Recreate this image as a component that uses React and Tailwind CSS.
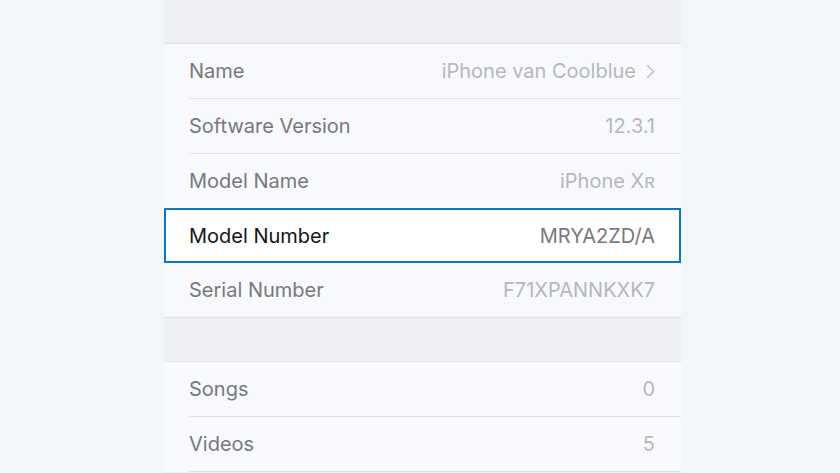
const font = { fontFamily: '"Inter", "Liberation Sans", sans-serif' };

const sectionA = [
  { label: 'Name', value: 'iPhone van Coolblue', chevron: true },
  { label: 'Software Version', value: '12.3.1' },
  { label: 'Model Name', value: 'iPhone Xʀ' },
  { label: 'Model Number', value: 'MRYA2ZD/A', active: true },
  { label: 'Serial Number', value: 'F71XPANNKXK7' },
];

const sectionB = [
  { label: 'Songs', value: '0' },
  { label: 'Videos', value: '5' },
];

function Row({ row, last }) {
  if (row.active) {
    return (
      <div className="h-[55px] -mt-px border-2 border-[#0b76c2] bg-white pl-[23px] pr-[24px] flex items-center justify-between relative z-10">
        <span className="text-[20px] text-[#141414]">{row.label}</span>
        <span className="text-[20px] text-[#79797d]">{row.value}</span>
      </div>
    );
  }
  return (
    <div className={`h-[55px] pl-[25px] bg-[#f8f9fd] ${last ? 'border-b border-[#e2e3e7]' : ''}`}>
      <div className={`h-full flex items-center justify-between pr-[26px] ${last ? '' : 'border-b border-[#e2e3e7]'}`}>
        <span className="text-[20px] text-[#77787c]">{row.label}</span>
        <span className="text-[20px] text-[#b6b7bb] flex items-center gap-[10px]">
          {row.value}
          {row.chevron && (
            <svg width="9" height="15" viewBox="0 0 9 15" fill="none">
              <path d="M1.5 1.5 L7.5 7.5 L1.5 13.5" stroke="#c4c5c9" strokeWidth="1.6" strokeLinecap="round" strokeLinejoin="round" />
            </svg>
          )}
        </span>
      </div>
    </div>
  );
}

export default function App() {
  return (
    <div className="w-[840px] h-[473px] bg-[#f1f6fb] overflow-hidden" style={font}>
      <div className="ml-[164px] w-[517px] h-full bg-[#eff0f4]">
        <div className="h-[44px] border-b border-[#e2e3e7]" />
        {sectionA.map((r, i) => (
          <Row key={r.label} row={r} last={i === sectionA.length - 1} />
        ))}
        <div className="h-[44px] border-b border-[#e2e3e7]" />
        {sectionB.map((r) => (
          <Row key={r.label} row={r} />
        ))}
      </div>
    </div>
  );
}
